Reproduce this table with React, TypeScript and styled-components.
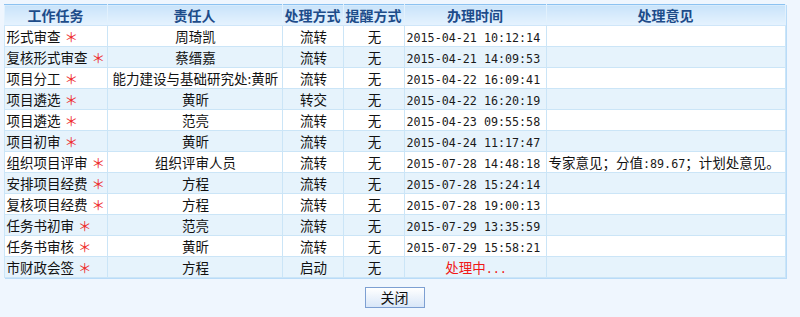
import React from 'react';
import styled, { createGlobalStyle } from 'styled-components';

const GlobalStyle = createGlobalStyle`
  html, body {
    margin: 0;
    padding: 0;
    background: #eff6fe;
  }
`;

const Page = styled.div`
  width: 800px;
  height: 317px;
  padding: 4px 0 0 4px;
  box-sizing: border-box;
  font-family: "Noto Sans CJK SC", "Liberation Sans", sans-serif;
  font-size: 13.5px;
  color: #111;
`;

const Panel = styled.div`
  width: 781px;
  display: flex;
  flex-direction: column;
  align-items: center;
`;

const Grid = styled.table`
  width: 781px;
  table-layout: fixed;
  border-collapse: collapse;
  border: 1px solid #6fb0ec;
  box-shadow: 1px 1px 0 #b9dbf8;
  background: #fff;
`;

const HeadCell = styled.th`
  height: 20px;
  padding: 0;
  font-weight: bold;
  font-size: 14px;
  line-height: 20px;
  color: #1d4c8a;
  text-align: center;
  white-space: nowrap;
  background: linear-gradient(#c9e3fa, #e6f3fe);
  border-top: 1px solid #8cc2f1;
  border-bottom: 1px solid #cfe6f9;
  border-left: 1px solid #e2f1fd;
  border-right: 1px solid #e2f1fd;
`;

const Row = styled.tr<{ $alt: boolean }>`
  background: ${props => (props.$alt ? '#e6f3fc' : '#ffffff')};
`;

const Cell = styled.td<{ $align?: 'left' | 'center' }>`
  height: 20px;
  padding: 0 0 0 2px;
  line-height: 20px;
  text-align: ${props => props.$align || 'left'};
  white-space: nowrap;
  overflow: hidden;
  border: 1px solid #cbe5f7;
`;

const Star = styled.span`
  margin-left: 4px;
  color: #ee2a2a;
`;

const Mono = styled.span<{ $color?: string }>`
  font-family: "DejaVu Sans Mono", "Noto Sans CJK SC", monospace;
  font-size: 11.7px;
  line-height: 0;
  color: ${props => props.$color || '#1a1a1a'};
`;

const Pending = styled.span`
  color: #f01818;
`;

const CloseButton = styled.button`
  margin-top: 9px;
  width: 60px;
  height: 21px;
  padding: 0;
  border: 1px solid #7d9fd2;
  background: linear-gradient(#ffffff, #d8e6f8);
  font-family: "Noto Sans CJK SC", sans-serif;
  font-size: 14px;
  line-height: 19px;
  color: #111;
  cursor: pointer;
`;

interface Record {
  task: string;
  person: string;
  mode: string;
  remind: string;
  time: string;
  note?: React.ReactNode;
}

const records: Record[] = [
  { task: '形式审查', person: '周琦凯', mode: '流转', remind: '无', time: '2015-04-21 10:12:14' },
  { task: '复核形式审查', person: '蔡缙嘉', mode: '流转', remind: '无', time: '2015-04-21 14:09:53' },
  { task: '项目分工', person: '能力建设与基础研究处:黄昕', mode: '流转', remind: '无', time: '2015-04-22 16:09:41' },
  { task: '项目遴选', person: '黄昕', mode: '转交', remind: '无', time: '2015-04-22 16:20:19' },
  { task: '项目遴选', person: '范亮', mode: '流转', remind: '无', time: '2015-04-23 09:55:58' },
  { task: '项目初审', person: '黄昕', mode: '流转', remind: '无', time: '2015-04-24 11:17:47' },
  {
    task: '组织项目评审',
    person: '组织评审人员',
    mode: '流转',
    remind: '无',
    time: '2015-07-28 14:48:18',
    note: (
      <>
        专家意见；分值<Mono>:89.67</Mono>；计划处意见。
      </>
    ),
  },
  { task: '安排项目经费', person: '方程', mode: '流转', remind: '无', time: '2015-07-28 15:24:14' },
  { task: '复核项目经费', person: '方程', mode: '流转', remind: '无', time: '2015-07-28 19:00:13' },
  { task: '任务书初审', person: '范亮', mode: '流转', remind: '无', time: '2015-07-29 13:35:59' },
  { task: '任务书审核', person: '黄昕', mode: '流转', remind: '无', time: '2015-07-29 15:58:21' },
  { task: '市财政会签', person: '方程', mode: '启动', remind: '无', time: '' },
];

const widths = [103, 175, 61, 61, 142, 239];
const headings = ['工作任务', '责任人', '处理方式', '提醒方式', '办理时间', '处理意见'];

export default function App() {
  return (
    <Page>
      <GlobalStyle />
      <Panel>
        <Grid>
          <colgroup>
            {widths.map((w, i) => (
              <col key={i} style={{ width: w }} />
            ))}
          </colgroup>
          <thead>
            <tr>
              {headings.map(h => (
                <HeadCell key={h}>{h}</HeadCell>
              ))}
            </tr>
          </thead>
          <tbody>
            {records.map((r, i) => (
              <Row key={i} $alt={i % 2 === 1}>
                <Cell>
                  {r.task}
                  <Star>＊</Star>
                </Cell>
                <Cell $align="center">{r.person}</Cell>
                <Cell $align="center">{r.mode}</Cell>
                <Cell $align="center">{r.remind}</Cell>
                {r.time ? (
                  <Cell>
                    <Mono>{r.time}</Mono>
                  </Cell>
                ) : (
                  <Cell $align="center">
                    <Pending>
                      处理中<Mono $color="#f01818">...</Mono>
                    </Pending>
                  </Cell>
                )}
                <Cell>{r.note}</Cell>
              </Row>
            ))}
          </tbody>
        </Grid>
        <CloseButton>关闭</CloseButton>
      </Panel>
    </Page>
  );
}
